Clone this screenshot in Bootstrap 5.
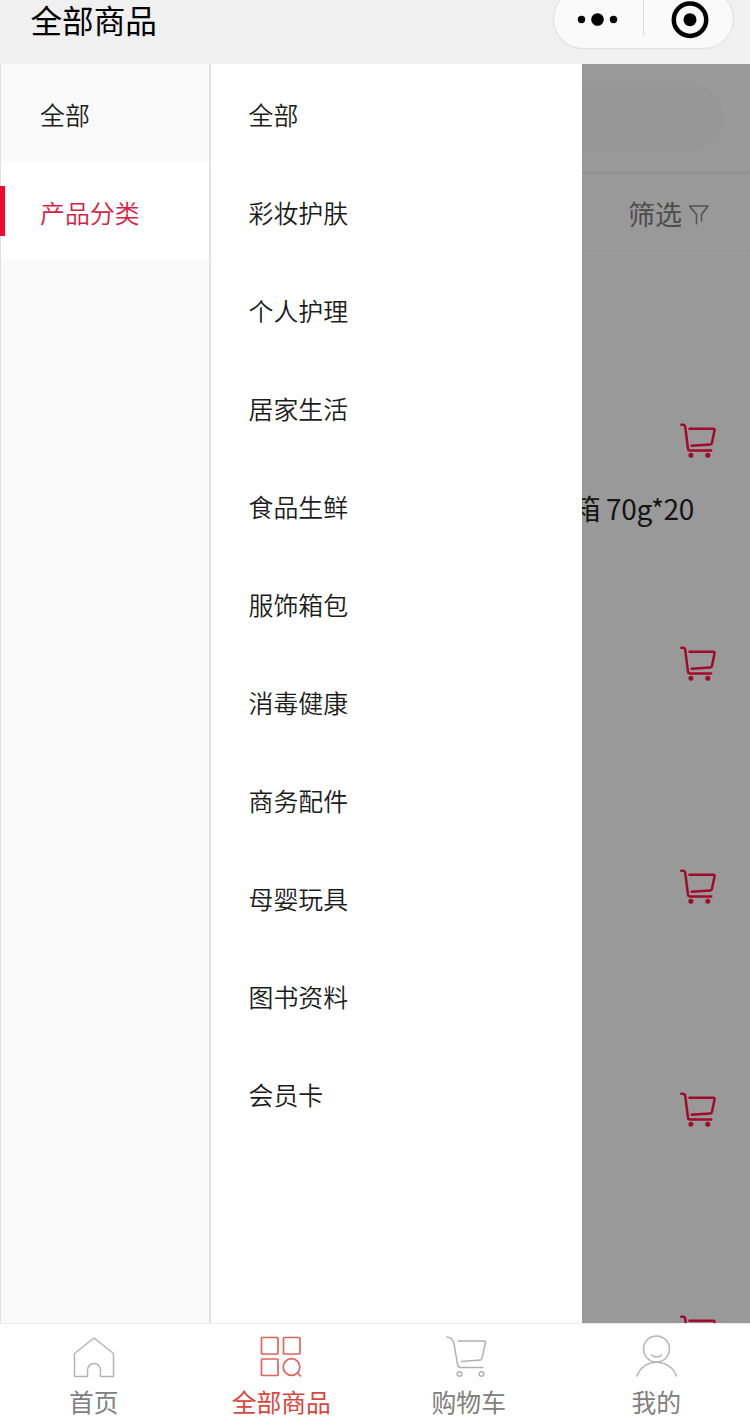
<!DOCTYPE html>
<html lang="zh-CN">
<head>
<meta charset="utf-8">
<meta name="viewport" content="width=device-width, initial-scale=1">
<title>全部商品</title>
<link href="https://cdn.jsdelivr.net/npm/bootstrap@5.3.0/dist/css/bootstrap.min.css" rel="stylesheet">
<style>
body{font-family:"Noto Sans CJK SC",sans-serif;color:#222;background:#fff;letter-spacing:0}
.app{height:1424px;width:750px}
.topbar{height:64px;background:#f0f0f0;padding-left:30.5px;padding-right:16px}
.topbar h1{font-size:31.6px;line-height:38px;font-weight:400;color:#000}
.capsule{width:181px;height:60px;margin-top:-11px;border:1px solid #dfdfdf;border-radius:30px;background:#fafafa}
.shop{height:1259px}
.side{width:211px;background:#fafafa;border-right:2px solid #e4e4e4;border-left:1px solid #e0e0e0}
.cat{height:98px;font-size:24.9px;font-weight:350;line-height:30px;padding:2px 0 0 37.5px;border:0;background:transparent;color:#1c1c1c;text-align:left}
.side .cat{padding-left:39px}
.side .cat.current{background:#fff;color:#d81e45}
.cat.current::before{content:"";position:absolute;left:-1px;top:24px;width:5px;height:50px;background:#f00a2d}
.panel{width:371px;background:#fff}
.goods{width:168px;background:#999}
.searchrow{height:110px;border-bottom:2px solid #909090;padding-top:20px}
.searchfield{width:141px;height:68px;border-radius:0 34px 34px 0;background:#979797}
.filter{height:78px;border-bottom:1px solid #949494;font-size:27px;color:#4d4d4d;padding:4px 0 0 46px}
.item{height:223px}
.item-name{height:68px;font-size:28px;line-height:66px;color:#151515;padding-right:56px}
.item-name span{letter-spacing:-.35px}
.item-cart{margin:103px 33px 0 0}
.tabs{height:101px;border-top:1px solid #ececec;background:#fff}
.tab{width:187.5px;font-size:24.8px;line-height:36px;color:#808080;padding-top:9px}
.tab svg{display:block;margin-bottom:4px}
.tab.current{color:#dc453e}
</style>
</head>
<body>
<svg class="d-none">
  <symbol id="cart" viewBox="0 0 37 37">
    <g fill="none" stroke="#a10a2b" stroke-width="2.500" stroke-linecap="round" stroke-linejoin="round">
      <path d="M1.300 1.700h1.500q2 .1 2.400 2l2.800 22q.2 1.800 2 1.800H31.200M9.500 5.700H33.300q1.500 0 1.300 1.300L32 19.700q-.3 1.600-1.800 1.700L11.500 22.700"/>
    </g>
    <circle cx="10.900" cy="32.300" r="2.500" fill="#a10a2b"/><circle cx="27.800" cy="32.300" r="2.500" fill="#a10a2b"/>
  </symbol>
</svg>
<div class="app d-flex flex-column overflow-hidden">
  <header class="topbar d-flex justify-content-between align-items-start flex-shrink-0">
    <h1 class="m-0">全部商品</h1>
    <div class="capsule">
      <svg width="179" height="58" viewBox="0 0 179 58">
        <circle cx="27.500" cy="29.500" r="3.700"/><circle cx="43.500" cy="29.500" r="6.300"/><circle cx="59.500" cy="29.500" r="3.700"/>
        <path d="M89.500 9v37" stroke="#dedede"/>
        <circle cx="136" cy="29.700" r="16.200" fill="none" stroke="#000" stroke-width="4.500"/><circle cx="136" cy="29.700" r="6.500"/>
      </svg>
    </div>
  </header>
  <main class="shop d-flex flex-shrink-0">
    <nav class="side d-flex flex-column flex-shrink-0">
      <button class="cat d-flex align-items-center">全部</button>
      <button class="cat current d-flex align-items-center position-relative">产品分类</button>
    </nav>
    <nav class="panel d-flex flex-column flex-shrink-0">
      <button class="cat d-flex align-items-center">全部</button>
      <button class="cat d-flex align-items-center">彩妆护肤</button>
      <button class="cat d-flex align-items-center">个人护理</button>
      <button class="cat d-flex align-items-center">居家生活</button>
      <button class="cat d-flex align-items-center">食品生鲜</button>
      <button class="cat d-flex align-items-center">服饰箱包</button>
      <button class="cat d-flex align-items-center">消毒健康</button>
      <button class="cat d-flex align-items-center">商务配件</button>
      <button class="cat d-flex align-items-center">母婴玩具</button>
      <button class="cat d-flex align-items-center">图书资料</button>
      <button class="cat d-flex align-items-center">会员卡</button>
    </nav>
    <section class="goods overflow-hidden flex-shrink-0">
      <div class="searchrow"><div class="searchfield"></div></div>
      <div class="filter d-flex align-items-center">筛选
        <svg class="ms-1" width="24" height="24" viewBox="0 0 24 24" fill="none" stroke="#515151" stroke-width="1.500" stroke-linejoin="round"><path d="M10.500 21.500V11.500L3.500 3H22L15.500 11.500V18.500"/></svg>
      </div>
      <div class="item d-flex flex-column align-items-end">
        <div class="item-name"></div>
        <svg class="item-cart" width="37" height="37"><use href="#cart"/></svg>
      </div>
      <div class="item d-flex flex-column align-items-end">
        <div class="item-name text-nowrap"><span>箱 70g*20</span></div>
        <svg class="item-cart" width="37" height="37"><use href="#cart"/></svg>
      </div>
      <div class="item d-flex flex-column align-items-end">
        <div class="item-name"></div>
        <svg class="item-cart" width="37" height="37"><use href="#cart"/></svg>
      </div>
      <div class="item d-flex flex-column align-items-end">
        <div class="item-name"></div>
        <svg class="item-cart" width="37" height="37"><use href="#cart"/></svg>
      </div>
      <div class="item d-flex flex-column align-items-end">
        <div class="item-name"></div>
        <svg class="item-cart" width="37" height="37"><use href="#cart"/></svg>
      </div>
    </section>
  </main>
  <footer class="tabs d-flex flex-shrink-0">
    <div class="tab d-flex flex-column align-items-center">
      <svg width="46" height="46" viewBox="0 0 46 46" fill="none" stroke="#b5b5b5" stroke-width="1.500" stroke-linejoin="round"><path d="M3.500 20.500 23 5 42.500 20.500V43.500H29.500V37a6.500 6.500 0 0 0-13 0v6.500H3.500z"/></svg>
      <span>首页</span>
    </div>
    <div class="tab current d-flex flex-column align-items-center">
      <svg width="46" height="46" viewBox="0 0 46 46" fill="none" stroke="#e0645d" stroke-width="1.700"><rect x="3.500" y="4.500" width="16.500" height="16.500" rx=".8"/><rect x="25.500" y="4.500" width="16.500" height="16.500" rx=".8"/><rect x="3.500" y="26" width="16.500" height="16.500" rx=".8"/><circle cx="33.500" cy="34" r="8.300"/><path d="m39 39.500 4 4"/></svg>
      <span>全部商品</span>
    </div>
    <div class="tab d-flex flex-column align-items-center">
      <svg width="46" height="46" viewBox="0 0 46 46" fill="none" stroke="#b0b0b0" stroke-width="1.500" stroke-linecap="round" stroke-linejoin="round"><path d="M1 4q5.500.5 7 6.500L11.500 31.500Q12.300 34.500 14.500 34.500H37M12 8H38.500q1.300 0 1 1.300L36 25.500q-.3 1.400-1.500 1.500L15.500 28.500"/><circle cx="13.500" cy="41" r="2.300"/><circle cx="35.500" cy="41" r="2.300"/></svg>
      <span>购物车</span>
    </div>
    <div class="tab d-flex flex-column align-items-center">
      <svg width="46" height="46" viewBox="0 0 46 46" fill="none" stroke="#b5b5b5" stroke-width="1.500" stroke-linecap="round"><circle cx="23.500" cy="16" r="13"/><path d="M18.500 22q5 4 10 0M4 43C10.500 24.500 36.500 24.500 43.500 43"/></svg>
      <span>我的</span>
    </div>
  </footer>
</div>
<script src="https://cdn.jsdelivr.net/npm/bootstrap@5.3.0/dist/js/bootstrap.bundle.min.js"></script>
</body>
</html>
